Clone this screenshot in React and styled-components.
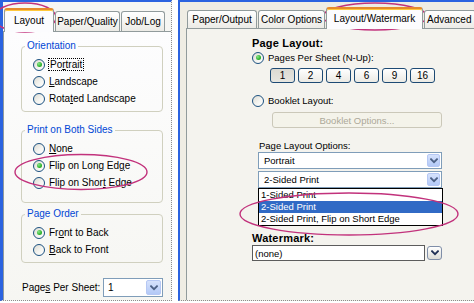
import React from 'react';
import styled, { createGlobalStyle } from 'styled-components';

const Global = createGlobalStyle`
  html, body { margin: 0; padding: 0; background: #ffffff; }
  body { font-family: "Liberation Sans", Arial, sans-serif; font-size: 10px; color: #000; }
`;

const Stage = styled.div`
  position: relative;
  width: 474px;
  height: 303px;
  overflow: hidden;
  display: flex;
  align-items: flex-start;
  background: #ffffff;
`;

const LeftWin = styled.div`
  box-sizing: border-box;
  width: 172px;
  height: 301px;
  border-top: 2px solid #2b63e0;
  border-left: 3px solid #2b63e0;
  border-right: 1px dotted #8e8e8e;
  border-bottom: 1px dotted #8e8e8e;
  background: #f6f6f3;
  display: flex;
  flex-direction: column;
  font-size: 10px;
`;

const RightWin = styled.div`
  box-sizing: border-box;
  margin-left: 6px;
  width: 296px;
  height: 301px;
  border-top: 2px solid #2b63e0;
  border-left: 2px solid #2b63e0;
  border-bottom: 1px dotted #8e8e8e;
  background: #efede4;
  padding-left: 6px;
  display: flex;
  flex-direction: column;
  font-size: 9.5px;
`;

const TabStrip = styled.div`
  display: flex;
  align-items: flex-end;
  height: ${p => p.$h}px;
  padding-left: ${p => p.$pl}px;
  position: relative;
  z-index: 1;
  flex: none;
`;

const Tab = styled.div`
  box-sizing: border-box;
  flex: none;
  width: ${p => p.$w}px;
  height: ${p => (p.$active ? p.$h + 4 : p.$h)}px;
  margin-bottom: ${p => (p.$active ? -1 : 0)}px;
  margin-right: 1px;
  border: 1px solid #919b9c;
  border-bottom: none;
  border-radius: 3px 3px 0 0;
  background: ${p => (p.$active ? '#fcfcfe' : 'linear-gradient(#ffffff, #ecebe6)')};
  ${p => (p.$active ? 'border-top: 2px solid #e68b2c; box-shadow: inset 0 1px 0 #ffc83c;' : '')}
  display: flex;
  align-items: center;
  justify-content: ${p => (p.$start ? 'flex-start' : 'center')};
  padding-left: ${p => (p.$start ? 2 : 0)}px;
  white-space: nowrap;
  overflow: hidden;
  font-size: 10px;
  padding-bottom: ${p => (p.$active ? 2 : 0)}px;
`;

const LeftPane = styled.div`
  flex: 1;
  border-top: 1px solid #919b9c;
  border-left: 1px solid #919b9c;
  background: linear-gradient(#fdfdfe, #f6f6f2);
  display: flex;
  flex-direction: column;
`;

const RightPane = styled.div`
  flex: 1;
  border-top: 1px solid #919b9c;
  border-left: 1px solid #919b9c;
  background: #f4f3ee;
  display: flex;
  flex-direction: column;
  padding-left: 65px;
`;

const Group = styled.fieldset`
  box-sizing: border-box;
  margin: ${p => p.$mt}px 0 0 17px;
  width: 142px;
  padding: 4px 0 ${p => p.$pb}px 0;
  border: 1px solid #d0d0bf;
  border-radius: 4px;
  min-inline-size: 0;
`;

const Legend = styled.legend`
  padding: 0 2px;
  margin-left: 3px;
  color: #0046d5;
  font-size: 10px;
  line-height: 12px;
`;

const GroupBody = styled.div`
  padding-left: 11px;
  display: flex;
  flex-direction: column;
`;

const RadioRow = styled.div`
  display: flex;
  align-items: center;
  gap: 4px;
  height: ${p => p.$h || 17}px;
  margin-top: ${p => p.$mt || 0}px;
  white-space: nowrap;
`;

const RadioDot = styled.span`
  box-sizing: border-box;
  flex: none;
  position: relative;
  width: 12px;
  height: 12px;
  border-radius: 50%;
  border: 1px solid #1c5180;
  background: linear-gradient(135deg, #dcdbd3 0%, #f4f4f0 55%, #ffffff 100%);
  &::after {
    content: '';
    display: ${p => (p.$checked ? 'block' : 'none')};
    position: absolute;
    left: 2.5px;
    top: 2.5px;
    width: 5px;
    height: 5px;
    border-radius: 50%;
    background: radial-gradient(circle at 35% 35%, #8ae68a 0%, #2fb42f 60%, #1a8a1a 100%);
  }
`;

const Focus = styled.span`
  outline: 1px dotted #000;
  outline-offset: 0px;
  padding: 0 1px;
`;

const PagesRow = styled.div`
  display: flex;
  align-items: center;
  justify-content: space-between;
  width: 141px;
  margin: 15px 0 0 18px;
  height: 19px;
`;

const Combo = styled.div`
  box-sizing: border-box;
  display: flex;
  align-items: center;
  width: ${p => p.$w}px;
  height: ${p => p.$h}px;
  margin-left: ${p => p.$ml || 0}px;
  margin-top: ${p => p.$mt || 0}px;
  border: 1px solid ${p => (p.$dark ? '#5c5c5c' : '#7f9db9')};
  background: #ffffff;
  padding-left: ${p => p.$pl || 3}px;
  padding-right: 1px;
  white-space: nowrap;
  font-size: ${p => p.$fs || 9.5}px;
`;

const ComboText = styled.span`
  flex: 1;
  overflow: hidden;
`;

const ComboArrow = styled.span`
  box-sizing: border-box;
  flex: none;
  width: ${p => p.$s}px;
  height: ${p => p.$s}px;
  border: 1px solid #b6c8f4;
  border-radius: 2px;
  background: linear-gradient(#d6e2fc, #b3c9f7);
  display: flex;
  align-items: center;
  justify-content: center;
`;

const Chevron = ({ color = '#4d6185' }) => (
  <svg width="8" height="6" viewBox="0 0 8 6">
    <path d="M1 1.2 L4 4.2 L7 1.2" fill="none" stroke={color} strokeWidth="1.8" strokeLinecap="square" />
  </svg>
);

const SectionTitle = styled.div`
  font-weight: bold;
  font-size: 11px;
  line-height: 13px;
  letter-spacing: 0.2px;
  margin-top: ${p => p.$mt}px;
  white-space: nowrap;
`;

const NUpRow = styled.div`
  display: flex;
  gap: 3px;
  margin: 3px 0 0 18px;
`;

const XPButton = styled.div`
  box-sizing: border-box;
  width: 25px;
  height: 15px;
  border: 1px solid #1d4a74;
  border-radius: 3px;
  background: ${p => (p.$pressed ? 'linear-gradient(#dcdad2, #e7e6e0)' : 'linear-gradient(#ffffff, #ebeae4)')};
  display: flex;
  align-items: center;
  justify-content: center;
  font-size: 10px;
`;

const DisabledButton = styled.div`
  box-sizing: border-box;
  width: 170px;
  height: 16px;
  margin: 4px 0 0 20px;
  border: 1px solid #cbc8b9;
  border-radius: 3px;
  background: #f4f3ea;
  color: #aca899;
  display: flex;
  align-items: center;
  justify-content: center;
  font-size: 9.5px;
`;

const FieldLabel = styled.div`
  margin: 12px 0 0 7px;
  line-height: 12px;
  white-space: nowrap;
`;

const ListBox = styled.div`
  box-sizing: border-box;
  width: 185px;
  margin-left: 6px;
  border: 1px solid #000;
  background: #fff;
`;

const ListItem = styled.div`
  height: 12px;
  line-height: 12px;
  padding-left: 2px;
  white-space: nowrap;
  background: ${p => (p.$sel ? '#316ac5' : 'transparent')};
  color: ${p => (p.$sel ? '#fff' : '#000')};
`;

const WatermarkRow = styled.div`
  display: flex;
  align-items: center;
`;

const GreyDropButton = styled.div`
  box-sizing: border-box;
  width: 15px;
  height: 14px;
  margin-left: 2px;
  border: 1px solid #7f8ea8;
  border-radius: 3px;
  background: linear-gradient(#ffffff, #dcdcd6);
  display: flex;
  align-items: center;
  justify-content: center;
`;

const Overlay = styled.svg`
  position: absolute;
  left: 0;
  top: 0;
  pointer-events: none;
`;

const Radio = ({ checked, children, h, mt }) => (
  <RadioRow $h={h} $mt={mt}>
    <RadioDot $checked={checked} />
    <span>{children}</span>
  </RadioRow>
);

export default function App() {
  return (
    <>
      <Global />
      <Stage>
        <LeftWin>
          <TabStrip $h={29} $pl={1}>
            <Tab $w={50} $h={20} $active>Layout</Tab>
            <Tab $w={65} $h={20}>Paper/Quality</Tab>
            <Tab $w={44} $h={20}>Job/Log</Tab>
          </TabStrip>
          <LeftPane>
            <Group $mt={8} $pb={4}>
              <Legend>Orientation</Legend>
              <GroupBody>
                <Radio checked><Focus>Po<u>r</u>trait</Focus></Radio>
                <Radio><u>L</u>andscape</Radio>
                <Radio>Rota<u>t</u>ed Landscape</Radio>
              </GroupBody>
            </Group>
            <Group $mt={12} $pb={11}>
              <Legend>Print on Both Sides</Legend>
              <GroupBody>
                <Radio><u>N</u>one</Radio>
                <Radio checked>Flip on Long Ed<u>g</u>e</Radio>
                <Radio>Flip on Shor<u>t</u> Edge</Radio>
              </GroupBody>
            </Group>
            <Group $mt={5} $pb={4}>
              <Legend>Page Order</Legend>
              <GroupBody>
                <Radio checked>Fr<u>o</u>nt to Back</Radio>
                <Radio><u>B</u>ack to Front</Radio>
              </GroupBody>
            </Group>
            <PagesRow>
              <span>Page<u>s</u> Per Sheet:</span>
              <Combo $w={60} $h={19} $pl={4} $fs={10}>
                <ComboText>1</ComboText>
                <ComboArrow $s={15}><Chevron /></ComboArrow>
              </Combo>
            </PagesRow>
          </LeftPane>
        </LeftWin>

        <RightWin>
          <TabStrip $h={26} $pl={1}>
            <Tab $w={70} $h={18}>Paper/Output</Tab>
            <Tab $w={67} $h={18}>Color Options</Tab>
            <Tab $w={97} $h={18} $active>Layout/Watermark</Tab>
            <Tab $w={52} $h={18} $start>Advanced</Tab>
          </TabStrip>
          <RightPane>
            <SectionTitle $mt={8}>Page Layout:</SectionTitle>
            <Radio checked h={15}>Pages Per Sheet (N-Up):</Radio>
            <NUpRow>
              <XPButton $pressed>1</XPButton>
              <XPButton>2</XPButton>
              <XPButton>4</XPButton>
              <XPButton>6</XPButton>
              <XPButton>9</XPButton>
              <XPButton>16</XPButton>
            </NUpRow>
            <Radio h={15} mt={10}>Booklet Layout:</Radio>
            <DisabledButton>Booklet Options...</DisabledButton>
            <FieldLabel>Page Layout Options:</FieldLabel>
            <Combo $w={184} $h={17} $ml={6} $pl={5}>
              <ComboText>Portrait</ComboText>
              <ComboArrow $s={13}><Chevron /></ComboArrow>
            </Combo>
            <Combo $w={184} $h={17} $ml={6} $mt={2} $pl={5}>
              <ComboText>2-Sided Print</ComboText>
              <ComboArrow $s={13}><Chevron /></ComboArrow>
            </Combo>
            <ListBox>
              <ListItem>1-Sided Print</ListItem>
              <ListItem $sel>2-Sided Print</ListItem>
              <ListItem>2-Sided Print, Flip on Short Edge</ListItem>
            </ListBox>
            <SectionTitle $mt={6}>Watermark:</SectionTitle>
            <WatermarkRow>
              <Combo $w={173} $h={16} $pl={2} $dark>
                <ComboText>(none)</ComboText>
              </Combo>
              <GreyDropButton><Chevron color="#1f2f54" /></GreyDropButton>
            </WatermarkRow>
          </RightPane>
        </RightWin>

        <Overlay width="474" height="303" viewBox="0 0 474 303">
          <g fill="none" stroke="#c2327c" strokeWidth="1.4">
            <ellipse cx="25" cy="17.5" rx="31" ry="14.5" />
            <ellipse cx="81" cy="172" rx="66" ry="17.5" />
            <ellipse cx="375" cy="16.5" rx="52" ry="13.5" />
            <ellipse cx="349" cy="214" rx="109" ry="21" />
          </g>
        </Overlay>
      </Stage>
    </>
  );
}
